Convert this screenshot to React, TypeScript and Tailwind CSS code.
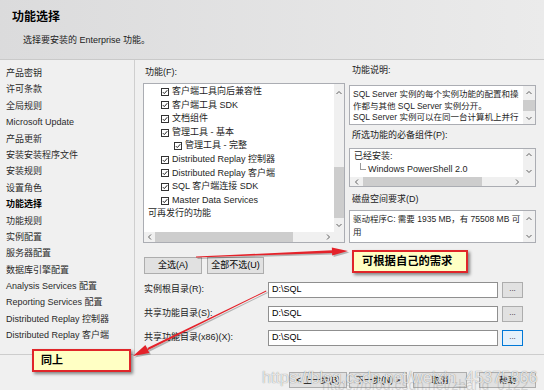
import React from "react";

function Chev({ dir }: { dir: "up" | "down" | "left" | "right" }) {
  const d = {
    up: "M1.5 5 L4 2.5 L6.5 5",
    down: "M1.5 3 L4 5.5 L6.5 3",
    left: "M5 1.5 L2.5 4 L5 6.5",
    right: "M3 1.5 L5.5 4 L3 6.5",
  }[dir];
  return (
    <svg width="8" height="8" viewBox="0 0 8 8">
      <path d={d} fill="none" stroke="#606060" strokeWidth="1" />
    </svg>
  );
}

function Check() {
  return (
    <svg width="8" height="8" viewBox="0 0 8 8" className="shrink-0">
      <rect x="0.5" y="0.5" width="7" height="7" fill="#fff" stroke="#333" strokeWidth="1" />
      <path d="M1.8 4.1 L3.3 5.6 L6.3 2.2" fill="none" stroke="#222" strokeWidth="1" />
    </svg>
  );
}

const navItems = [
  "产品密钥",
  "许可条款",
  "全局规则",
  "Microsoft Update",
  "产品更新",
  "安装安装程序文件",
  "安装规则",
  "设置角色",
  "功能选择",
  "功能规则",
  "实例配置",
  "服务器配置",
  "数据库引擎配置",
  "Analysis Services 配置",
  "Reporting Services 配置",
  "Distributed Replay 控制器",
  "Distributed Replay 客户端",
];

const treeRows: { t: string; indent: number; check: boolean }[] = [
  { t: "客户端工具向后兼容性", indent: 17, check: true },
  { t: "客户端工具 SDK", indent: 17, check: true },
  { t: "文档组件", indent: 17, check: true },
  { t: "管理工具 - 基本", indent: 17, check: true },
  { t: "管理工具 - 完整", indent: 30, check: true },
  { t: "Distributed Replay 控制器", indent: 17, check: true },
  { t: "Distributed Replay 客户端", indent: 17, check: true },
  { t: "SQL 客户端连接 SDK", indent: 17, check: true },
  { t: "Master Data Services", indent: 17, check: true },
  { t: "可再发行的功能", indent: 4, check: false },
];

function PathRow({ label, focused }: { label: string; focused?: boolean }) {
  return (
    <div className="flex items-center h-[16px] ml-[1px]">
      <div className="w-[124px] text-[9px] text-[#222] whitespace-nowrap">{label}</div>
      <div className="w-[230px] h-[16px] bg-white border border-[#8f8f8f] flex items-center pl-[3px] text-[9px] text-black">
        D:\SQL
      </div>
      <div
        className={
          "ml-[4px] w-[21px] h-[16px] flex items-center justify-center text-[8px] leading-none pb-[3px] " +
          (focused ? "bg-[#e5f1fb] border border-[#0078d7]" : "bg-[#e1e1e1] border border-[#adadad]")
        }
      >
        ...
      </div>
    </div>
  );
}

export default function App() {
  return (
    <div className="relative w-[544px] h-[390px] overflow-hidden bg-[#f0f0f0] flex flex-col font-['Liberation_Sans','Noto_Sans_CJK_SC',sans-serif] text-[#1e1e1e]">
      {/* header */}
      <div className="h-[60px] shrink-0 border-b border-[#c9c9c9] bg-linear-to-r from-[#dbdbdc] to-[#ebebeb] pl-[12px] pt-[9px]">
        <div className="text-[12px] leading-[16px] font-bold text-black">功能选择</div>
        <div className="mt-[9px] ml-[11px] text-[9px] leading-[12px] text-[#222]">选择要安装的 Enterprise 功能。</div>
      </div>

      {/* body */}
      <div className="flex h-[294px] shrink-0">
        <div className="w-[135px] border-r border-[#cfcfcf] pt-[5px] pl-[6px]">
          {navItems.map((n) => (
            <div
              key={n}
              className={
                "h-[16.4px] leading-[16.4px] text-[9px] whitespace-nowrap " +
                (n === "功能选择" ? "font-bold text-black" : "text-[#2a2a2a]")
              }
            >
              {n}
            </div>
          ))}
        </div>

        <div className="flex-1 pl-[8px] pt-[4px]">
          <div className="grid grid-cols-[202px_187px] gap-x-[4px]">
            {/* left column */}
            <div className="flex flex-col">
              <div className="mt-[2px] h-[12px] leading-[12px] text-[9px] text-[#222] pl-[2px]">功能(F):</div>
              <div className="mt-[5px] w-[202px] h-[160px] border border-[#abadb3] bg-white flex flex-col">
                <div className="flex flex-1 min-h-0">
                  <div className="flex-1 pt-[1px]">
                    {treeRows.map((r) => (
                      <div key={r.t} className="h-[13.6px] flex items-center" style={{ paddingLeft: r.indent }}>
                        {r.check && <Check />}
                        <span className={"text-[9px] whitespace-nowrap text-[#1e1e1e] " + (r.check ? "ml-[3px]" : "")}>{r.t}</span>
                      </div>
                    ))}
                  </div>
                  <div className="w-[10px] flex flex-col bg-[#f0f0f0]">
                    <div className="h-[18px] flex items-center justify-center">
                      <Chev dir="up" />
                    </div>
                    <div className="mt-[65px] h-[51px] bg-[#cdcdcd]" />
                    <div className="flex-1" />
                    <div className="h-[14px] flex items-center justify-center">
                      <Chev dir="down" />
                    </div>
                  </div>
                </div>
                <div className="h-[10px] flex bg-[#f0f0f0]">
                  <div className="flex-1 flex items-center">
                    <div className="w-[11px] flex justify-center">
                      <Chev dir="left" />
                    </div>
                    <div className="w-[138px] h-[10px] bg-[#cdcdcd]" />
                    <div className="flex-1" />
                    <div className="w-[12px] flex justify-center">
                      <Chev dir="right" />
                    </div>
                  </div>
                  <div className="w-[10px]" />
                </div>
              </div>
            </div>

            {/* right column */}
            <div className="flex flex-col">
              <div className="h-[12px] leading-[12px] text-[9px] text-[#222] pl-[3px]">功能说明:</div>
              <div className="mt-[9px] h-[40px] border border-[#abadb3] bg-white flex">
                <div className="flex-1 pt-[3px] pl-[3px] text-[8.5px] leading-[11.7px] text-[#1e1e1e] overflow-hidden">
                  <div className="whitespace-nowrap">SQL Server 实例的每个实例功能的配置和操</div>
                  <div className="whitespace-nowrap">作都与其他 SQL Server 实例分开。</div>
                  <div className="whitespace-nowrap">SQL Server 实例可以在同一台计算机上并行</div>
                </div>
                <div className="w-[12px] flex flex-col bg-[#f0f0f0]">
                  <div className="h-[14px] flex items-center justify-center">
                    <Chev dir="up" />
                  </div>
                  <div className="h-[11px] bg-[#cdcdcd]" />
                  <div className="flex-1 flex items-center justify-center">
                    <Chev dir="down" />
                  </div>
                </div>
              </div>

              <div className="mt-[4px] h-[12px] leading-[12px] text-[9px] text-[#222] pl-[3px]">所选功能的必备组件(P):</div>
              <div className="mt-[7px] h-[39px] border border-[#abadb3] bg-white flex flex-col">
                <div className="flex flex-1 min-h-0">
                  <div className="flex-1 pl-[4px] text-[9px] text-[#1e1e1e]">
                    <div className="h-[14px] leading-[14px]">已经安装:</div>
                    <div className="h-[14px] flex items-center">
                      <div className="self-start ml-[6px] w-[6px] h-[7px] border-l border-b border-[#9a9a9a]" />
                      <span className="ml-[2px] whitespace-nowrap">Windows PowerShell 2.0</span>
                    </div>
                  </div>
                  <div className="w-[12px] flex flex-col items-center justify-between bg-[#f0f0f0] py-[2px]">
                    <Chev dir="up" />
                    <Chev dir="down" />
                  </div>
                </div>
                <div className="h-[9px] flex bg-[#f0f0f0]">
                  <div className="flex-1 flex items-center">
                    <div className="w-[13px] flex justify-center">
                      <Chev dir="left" />
                    </div>
                    <div className="w-[119px] h-[9px] bg-[#cdcdcd]" />
                    <div className="flex-1" />
                    <div className="w-[12px] flex justify-center">
                      <Chev dir="right" />
                    </div>
                  </div>
                  <div className="w-[12px]" />
                </div>
              </div>

              <div className="mt-[6px] h-[12px] leading-[12px] text-[9px] text-[#222] pl-[3px]">磁盘空间要求(D)</div>
              <div className="mt-[5px] h-[33px] border border-[#abadb3] bg-white flex">
                <div className="flex-1 pt-[2px] pl-[3px] text-[8.5px] leading-[13px] text-[#1e1e1e] overflow-hidden">
                  <div className="whitespace-nowrap">驱动程序C: 需要 1935 MB，有 75508 MB 可</div>
                  <div>用</div>
                </div>
                <div className="w-[12px] flex flex-col items-center justify-between bg-[#f0f0f0] pt-[4px] pb-[2px]">
                  <Chev dir="up" />
                  <Chev dir="down" />
                </div>
              </div>
            </div>
          </div>

          {/* select buttons */}
          <div className="mt-[14px] ml-[1px] flex gap-[5px]">
            <div className="w-[58px] h-[17px] bg-[#e1e1e1] border border-[#adadad] flex items-center justify-center text-[9px] text-black">
              全选(A)
            </div>
            <div className="w-[57px] h-[17px] bg-[#e1e1e1] border border-[#adadad] flex items-center justify-center text-[9px] text-black">
              全部不选(U)
            </div>
          </div>

          <div className="mt-[8px] flex flex-col gap-[8px]">
            <PathRow label="实例根目录(R):" />
            <PathRow label="共享功能目录(S):" />
            <PathRow label="共享功能目录(x86)(X):" focused />
          </div>
        </div>
      </div>

      {/* footer */}
      <div className="flex-1 border-t border-[#cdcdcd] pt-[17px] pl-[289px] flex items-start">
        <div className="w-[58px] h-[16px] bg-[#e1e1e1] border border-[#adadad] flex items-center justify-center text-[8.5px] text-black">
          &lt; 上一步(B)
        </div>
        <div className="ml-[2px] w-[58px] h-[16px] bg-[#e1e1e1] border border-[#adadad] flex items-center justify-center text-[8.5px] text-black">
          下一步(N) &gt;
        </div>
        <div className="ml-[6px] w-[54px] h-[16px] bg-[#e1e1e1] border border-[#adadad] flex items-center justify-center text-[8.5px] text-black">
          取消
        </div>
        <div className="ml-[12px] w-[57px] h-[16px] bg-[#e1e1e1] border border-[#adadad] flex items-center justify-center text-[8.5px] text-black">
          帮助
        </div>
      </div>

      {/* annotation arrows */}
      <svg className="absolute inset-0 pointer-events-none" width="544" height="390" viewBox="0 0 544 390">
        <g opacity="0.25" transform="translate(1.5,1.5)">
          <polygon points="196,256.6 332,250.4 332.1,252.9 196,257.4" fill="#000" />
          <polygon points="348,251 332.16,255.6 331.84,247.6" fill="#000" />
          <polygon points="266,290.6 148.3,347.7 146.7,350.7 266.4,291.4" fill="#000" />
          <polygon points="133,356 149.4,353 145.4,344.9" fill="#000" />
        </g>
        <polygon points="196,256.6 332,250.3 332.1,252.9 196,257.4" fill="#e4222a" />
        <polygon points="348,251 332.16,255.6 331.84,247.6" fill="#e4222a" />
        <polygon points="266,290.6 148.3,347.5 146.7,350.7 266.4,291.4" fill="#e4222a" />
        <polygon points="133,356 149.4,353 145.4,344.9" fill="#e4222a" />
      </svg>

      {/* callouts */}
      <div className="absolute left-[352px] top-[250px] w-[116px] h-[23px] bg-[#ffffc4] border-2 border-[#e0262a] shadow-[2px_2px_3px_rgba(0,0,0,0.45)] flex items-center pl-[8px] text-[11.3px] font-bold text-black whitespace-nowrap">
        可根据自己的需求
      </div>
      <div className="absolute left-[32px] top-[349px] w-[99px] h-[23px] bg-[#ffffc4] border-2 border-[#e0262a] shadow-[2px_2px_3px_rgba(0,0,0,0.45)] flex items-center pl-[7px] text-[11px] font-bold text-black">
        同上
      </div>

      {/* watermarks */}
      <div className="absolute left-[322px] top-[377px] text-[14px] leading-[16px] text-[rgba(140,140,140,0.3)] whitespace-nowrap pointer-events-none">
        https://blog.csdn.net/zhang_0122
      </div>
      <div className="absolute left-[262px] top-[368px] text-[16.2px] leading-[18px] text-[rgba(255,255,255,0.8)] whitespace-nowrap pointer-events-none [text-shadow:0_0_1px_rgba(0,0,0,0.5)]">
        https://blog.csdn.net/weixin_45375866
      </div>
    </div>
  );
}
